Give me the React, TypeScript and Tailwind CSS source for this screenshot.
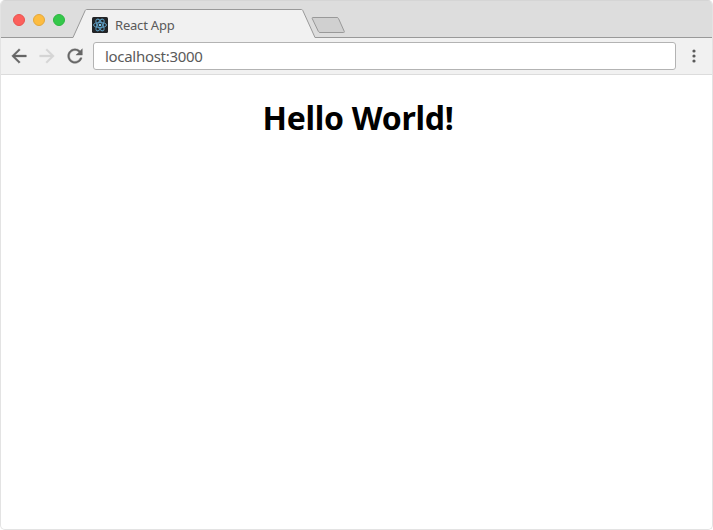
import React from "react";

function TrafficLights() {
  return (
    <div className="mt-3.5 ml-3 flex w-[59px] shrink-0 gap-2">
      <span className="h-3 w-3 shrink-0 rounded-full border border-[#e9524e] bg-[#fc605c]" />
      <span className="h-3 w-3 shrink-0 rounded-full border border-[#e3a73a] bg-[#fdbc40]" />
      <span className="h-3 w-3 shrink-0 rounded-full border border-[#2db641] bg-[#34c84a]" />
    </div>
  );
}

function ReactLogo() {
  return (
    <svg className="h-4 w-4 shrink-0" viewBox="0 0 16 16" fill="none" stroke="#5c9cc0" strokeWidth="1">
      <rect width="16" height="16" rx="1.5" fill="#222426" stroke="none" />
      <ellipse cx="8" cy="8" rx="6.5" ry="2.6" />
      <ellipse cx="8" cy="8" rx="6.5" ry="2.6" transform="rotate(60 8 8)" />
      <ellipse cx="8" cy="8" rx="6.5" ry="2.6" transform="rotate(120 8 8)" />
      <circle cx="8" cy="8" r="1.3" fill="#79c3ea" stroke="none" />
    </svg>
  );
}

function Tab() {
  return (
    <div className="relative h-[29px] w-[244px] shrink-0">
      <svg className="absolute inset-0 h-[29px] w-[244px]" viewBox="0 0 244 29">
        <path d="M0 29V28.5H1L13.2 1.5Q13.7 .5 14.5 .5H229.5Q230.3 .5 230.8 1.5L243 28.5H244V29Z" fill="#f1f1f1" />
        <path d="M0 28.5H1L13.2 1.5Q13.7 .5 14.5 .5H229.5Q230.3 .5 230.8 1.5L243 28.5H244" fill="none" stroke="#999" />
      </svg>
      <div className="relative flex items-center gap-[7px] pt-2 pl-5">
        <ReactLogo />
        <span className="text-[13px] leading-4 tracking-[-0.2px] text-[#5a5a5a]">React App</span>
      </div>
    </div>
  );
}

function TabStrip() {
  return (
    <div className="flex h-[38px] border-t border-[#d5d5d5] bg-[linear-gradient(#dddddd_36px,#999_36px)]">
      <div className="-mt-px flex">
        <TrafficLights />
        <div className="mt-[9px]">
          <Tab />
        </div>
        <svg className="mt-4 -ml-[5px] h-[18px] w-[35px]" viewBox="0 0 35 18">
          <path d="M2 1.5H26Q27 1.5 27.5 2.5L33.3 15.5Q33.6 16.5 32.5 16.5H9Q8 16.5 7.4 15.5L1.2 2.5Q.9 1.5 2 1.5Z" fill="#d0d0d0" stroke="#999" />
        </svg>
      </div>
    </div>
  );
}

function Toolbar() {
  return (
    <div className="flex h-[37px] items-center border-b border-[#dcdcdc] bg-[#f1f1f1] pl-[7px]">
      <svg className="h-[22px] w-[22px]" viewBox="0 0 24 24" fill="#666" stroke="#666" strokeWidth="0.4">
        <path d="M20 11H7.83l5.59-5.59L12 4l-8 8 8 8 1.41-1.41L7.83 13H20v-2z" />
      </svg>
      <svg className="ml-1.5 h-[22px] w-[22px]" viewBox="0 0 24 24" fill="#d5d5d5" stroke="#d5d5d5" strokeWidth="0.4">
        <path d="M12 4l-1.41 1.41L16.17 11H4v2h12.17l-5.58 5.59L12 20l8-8z" />
      </svg>
      <svg className="ml-1.5 h-[22px] w-[22px]" viewBox="0 0 24 24" fill="#666" stroke="#666" strokeWidth="0.4">
        <path d="M17.65 6.35A7.96 7.96 0 0 0 12 4c-4.42 0-7.99 3.58-7.99 8s3.57 8 7.99 8c3.73 0 6.84-2.55 7.73-6h-2.08A5.99 5.99 0 0 1 12 18c-3.31 0-6-2.69-6-6s2.69-6 6-6c1.66 0 3.14.69 4.22 1.78L13 11h7V4l-2.35 2.35z" />
      </svg>
      <div className="ml-[7px] flex h-7 w-[583px] items-center rounded-[3px] border border-[#b3b3b3] bg-white pl-[11px] text-[15px] tracking-[-0.3px] text-[#5a5a5a]">
        <span>localhost:3000</span>
      </div>
      <svg className="ml-4 h-4 w-1" viewBox="0 0 4 16" fill="#5a5a5a">
        <circle cx="2" cy="3" r="1.6" />
        <circle cx="2" cy="8" r="1.6" />
        <circle cx="2" cy="13" r="1.6" />
      </svg>
    </div>
  );
}

export default function App() {
  return (
    <div className="h-[530px] w-[713px] bg-white font-['Noto_Sans','Open_Sans',sans-serif]">
      <div className="h-full overflow-hidden rounded-[5px] border-x border-b border-[#e3e3e3]">
        <TabStrip />
        <Toolbar />
        <main className="pt-5 pl-[3px] text-center">
          <h1 className="text-[32px] leading-[46px] font-bold tracking-[-0.27px] text-black">Hello World!</h1>
        </main>
      </div>
    </div>
  );
}
